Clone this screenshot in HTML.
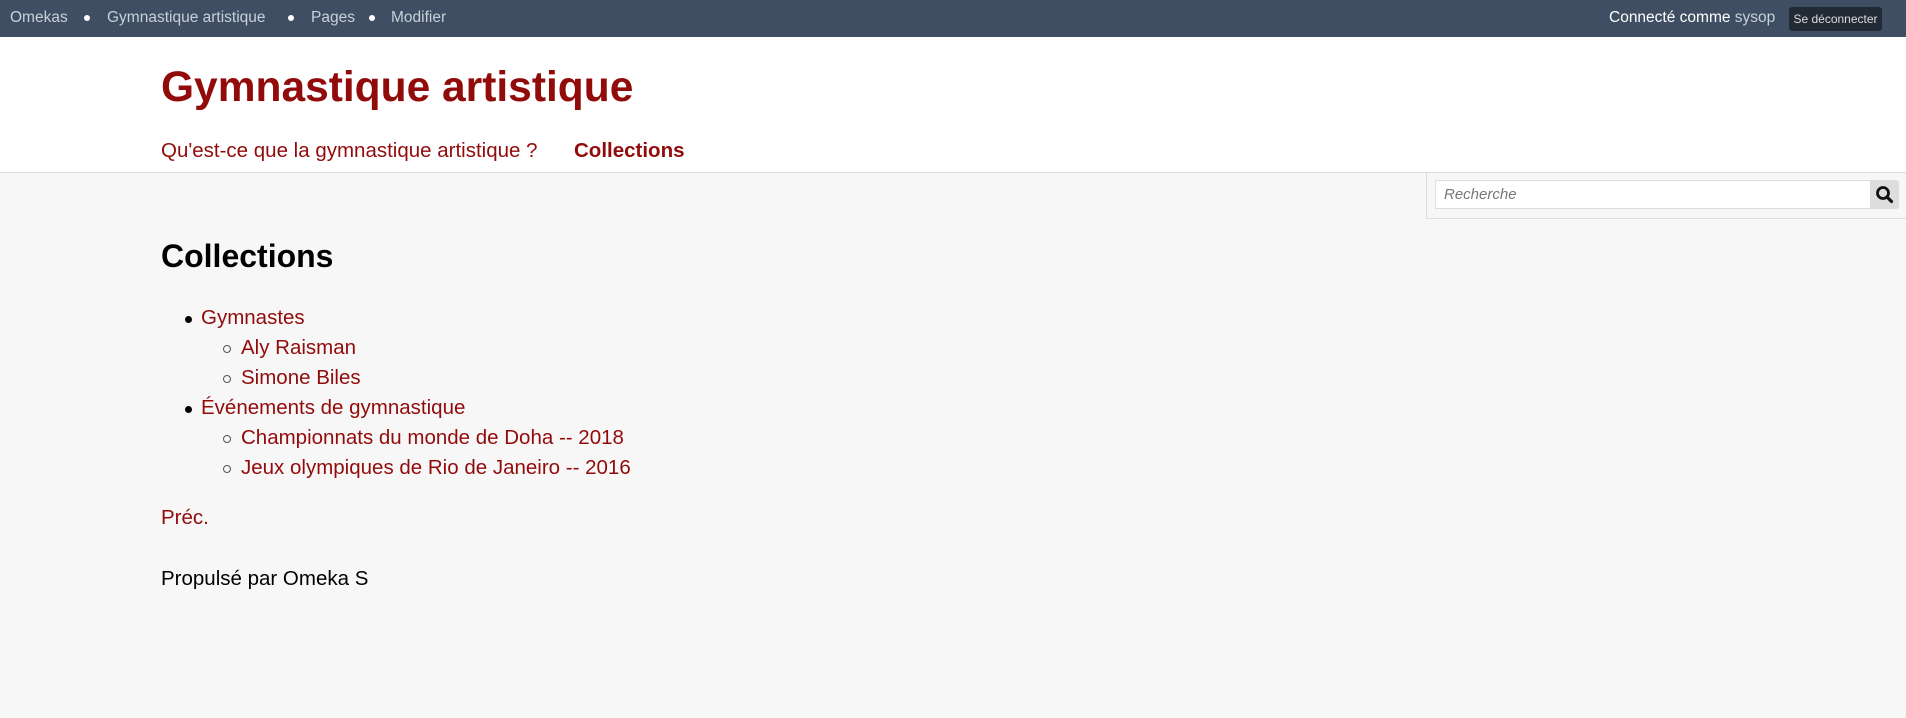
<!DOCTYPE html>
<html><head><meta charset="utf-8"><style>
*{margin:0;padding:0;box-sizing:border-box}
body{width:1906px;height:718px;background:#f7f7f7;font-family:"Liberation Sans",sans-serif;position:relative;overflow:hidden}
.top{position:absolute;left:0;top:0;width:1906px;height:37px;background:#3f4e62;color:#c8d0da;font-size:15.5px}
.top span{position:absolute;top:9px}
.dot{width:6px;height:6px;border-radius:50%;background:#fff;position:absolute;top:15px}
.hdr{position:absolute;left:0;top:37px;width:1906px;height:136px;background:#fff;border-bottom:1px solid #ddd}
a{color:#920b0b;text-decoration:none}
.t{position:absolute;left:161px;top:64px;font-size:42.5px;font-weight:bold;color:#920b0b}
.nav{position:absolute;top:139px;font-size:20.5px;color:#920b0b}
.search{position:absolute;left:1426px;top:173px;width:480px;height:46px;border-left:1px solid #ddd;border-bottom:1px solid #ddd;background:#f7f7f7}
.inp{position:absolute;left:8px;top:7px;width:436px;height:29px;background:#fff;border:1px solid #ddd;font-style:italic;color:#777;font-size:15px;padding:5px 8px}
.btn{position:absolute;left:443px;top:7px;width:29px;height:29px;background:#ddd;border-radius:0 3px 3px 0}
h1{position:absolute;left:161px;top:238px;font-size:32px;font-weight:bold;color:#000}
.li{position:absolute;font-size:20.5px;color:#920b0b}
.b{position:absolute;width:7px;height:7px;border-radius:50%;background:#000}
.c{position:absolute;width:8px;height:8px;border-radius:50%;border:1px solid #555}
</style></head><body>
<div class="top">
<span style="left:10px">Omekas</span><div class="dot" style="left:84px"></div>
<span style="left:107px">Gymnastique artistique</span><div class="dot" style="left:288px"></div>
<span style="left:311px">Pages</span><div class="dot" style="left:369px"></div>
<span style="left:391px">Modifier</span>
<span style="left:1609px;color:#fff">Connecté comme <span style="position:static;color:#c8d0da">sysop</span></span>
<div style="position:absolute;left:1789px;top:7px;width:93px;height:24px;background:#222a36;border-radius:3px;color:#ddd;font-size:12px;text-align:center;line-height:24px">Se déconnecter</div>
</div>
<div class="hdr"></div>
<div class="t">Gymnastique artistique</div>
<div class="nav" style="left:161px">Qu'est-ce que la gymnastique artistique ?</div>
<div class="nav" style="left:574px;font-weight:bold">Collections</div>
<div class="search"><div class="inp">Recherche</div><div class="btn"><svg width="29" height="29" viewBox="0 0 29 29"><circle cx="13" cy="13" r="5.5" fill="none" stroke="#111" stroke-width="2.8"/><path d="M17 17L21.5 21.5" stroke="#111" stroke-width="3.2" stroke-linecap="round"/></svg></div></div>
<h1>Collections</h1>
<div class="b" style="left:185px;top:316px"></div><div class="li" style="left:201px;top:306px">Gymnastes</div>
<div class="c" style="left:223px;top:345px"></div><div class="li" style="left:241px;top:336px">Aly Raisman</div>
<div class="c" style="left:223px;top:375px"></div><div class="li" style="left:241px;top:366px">Simone Biles</div>
<div class="b" style="left:185px;top:406px"></div><div class="li" style="left:201px;top:396px">Événements de gymnastique</div>
<div class="c" style="left:223px;top:435px"></div><div class="li" style="left:241px;top:426px">Championnats du monde de Doha -- 2018</div>
<div class="c" style="left:223px;top:465px"></div><div class="li" style="left:241px;top:456px">Jeux olympiques de Rio de Janeiro -- 2016</div>
<div class="li" style="left:161px;top:506px">Préc.</div>
<div class="li" style="left:161px;top:567px;color:#000">Propulsé par Omeka S</div>
</body></html>
